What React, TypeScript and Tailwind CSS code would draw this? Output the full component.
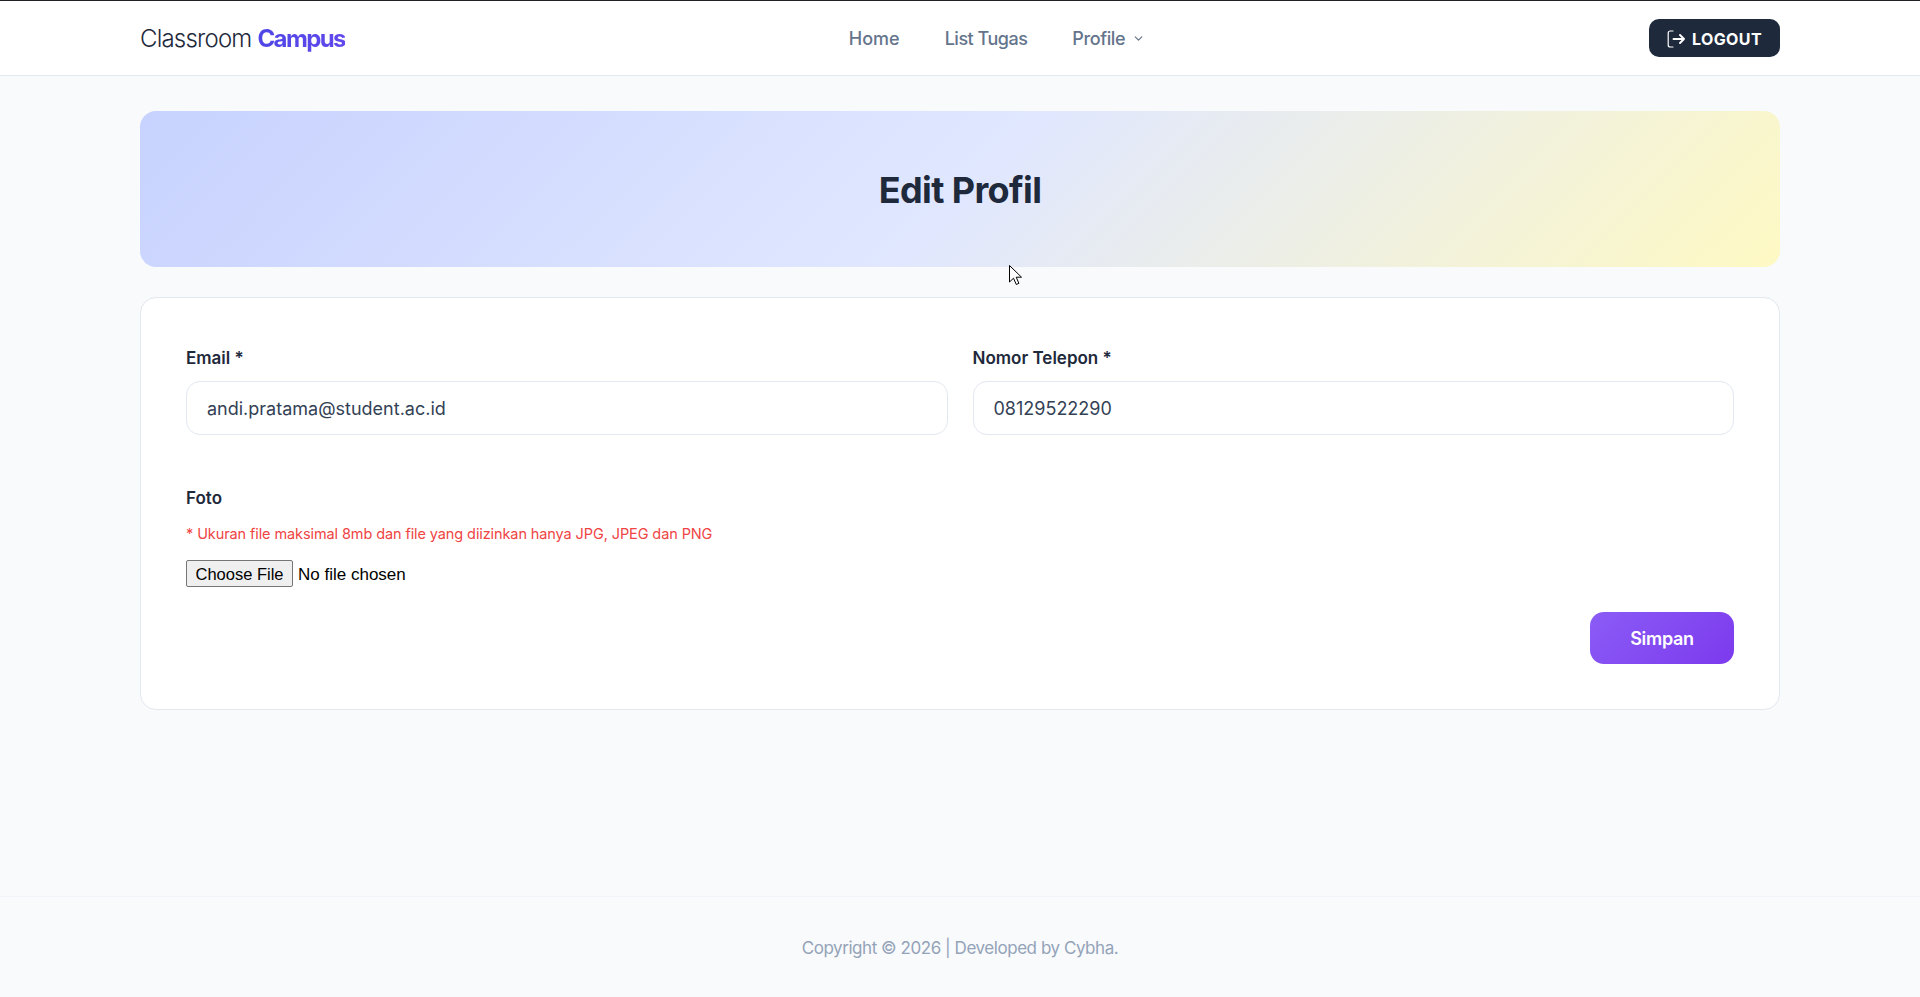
import { ChevronDown } from "lucide-react";

const App = () => {
  return (
    <div className="relative flex min-h-[997px] flex-col border-t border-[#202124] bg-[#f8fafc] font-['Inter',sans-serif] text-[#1e293b]">
      {/* Navbar */}
      <nav className="box-content h-[74px] border-b border-[#e2e8f0] bg-white">
        <div className="mx-auto flex h-full w-[1640px] items-center justify-between">
          <a className="pt-[2px] text-[24px] font-light tracking-[-0.8px] text-[#1e293b]">
            Classroom{" "}
            <span className="bg-gradient-to-r from-[#4f46e5] to-[#6048ec] bg-clip-text font-bold tracking-[-1.6px] text-transparent">
              Campus
            </span>
          </a>
          <div className="flex items-center gap-[45px] text-[18px] font-medium tracking-[-0.4px] text-[#64748b]">
            <a className="tracking-[0px]">Home</a>
            <a className="tracking-[-0.5px]">List Tugas</a>
            <a className="flex items-center gap-[7px]">
              Profile
              <ChevronDown size={13} strokeWidth={2.2} />
            </a>
          </div>
          <button className="flex h-[38px] w-[131px] items-center justify-center gap-[7px] rounded-[10px] bg-[#1e293b] pt-[1px] text-[16px] font-bold tracking-[0.4px] text-white">
            <svg width="18" height="18" viewBox="0 0 18 18" fill="none" stroke="currentColor" strokeLinecap="round" strokeLinejoin="round">
              <path d="M6 1H3.2C2 1 1.2 1.8 1.2 3v12c0 1.2.8 2 2 2H6" strokeWidth="1.2" />
              <path d="M6.5 9h10.5M13 5l4 4-4 4" strokeWidth="1.9" />
            </svg>
            LOGOUT
          </button>
        </div>
      </nav>

      {/* Content */}
      <main className="mx-auto flex w-[1640px] flex-col gap-[30px] pt-[35px]">
        <div className="flex h-[156px] items-center justify-center rounded-[16px] bg-[linear-gradient(135deg,#c7d2fe,#e0e7ff_50%,#fef9c3)] pt-[2px]">
          <h1 className="text-[36px] font-bold tracking-[-0.6px] text-[#1e293b]">Edit Profil</h1>
        </div>

        <form className="flex h-[413px] flex-col rounded-[16px] border border-[#e2e8f0] bg-white px-[45px] pt-[47px]">
          <div className="grid grid-cols-2 gap-[25px]">
            <div>
              <label className="mb-[10px] block text-[17px] font-semibold leading-[26px]">Email *</label>
              <input
                readOnly
                value="andi.pratama@student.ac.id"
                className="h-[54px] w-full rounded-[14px] border border-[#e2e8f0] bg-white px-[20px] text-[18px] text-[#334155] outline-none"
              />
            </div>
            <div>
              <label className="mb-[10px] block text-[17px] font-semibold leading-[26px]">Nomor Telepon *</label>
              <input
                readOnly
                value="08129522290"
                className="h-[54px] w-full rounded-[14px] border border-[#e2e8f0] bg-white px-[20px] text-[18px] text-[#334155] outline-none"
              />
            </div>
          </div>

          <label className="mt-[50px] block text-[17px] font-semibold leading-[26px]">Foto</label>
          <p className="mt-[12px] text-[14.5px] leading-[22px] tracking-[-0.1px] text-[#ef4444]">
            * Ukuran file maksimal 8mb dan file yang diizinkan hanya JPG, JPEG dan PNG
          </p>
          <input
            type="file"
            className="mt-[15px] block font-['Liberation_Sans',sans-serif] text-[17px] leading-[18px] text-black file:mr-[5px] file:h-[27px] file:rounded-[2px] file:border file:border-solid file:border-[#767676] file:bg-[#efefef] file:px-[8.5px] file:text-[16.5px] file:text-black"
          />

          <div className="mt-[25px] flex justify-end">
            <button
              type="button"
              className="h-[52px] w-[144px] rounded-[14px] bg-[linear-gradient(135deg,#8b5cf6,#7c3aed)] text-[18px] font-semibold tracking-[-0.3px] text-white"
            >
              Simpan
            </button>
          </div>
        </form>
      </main>

      {/* Footer */}
      <footer className="mt-auto flex h-[101px] items-center justify-center border-t border-[#f1f5f9] pt-[4px] text-[17px] tracking-[-0.45px] text-[#94a3b8]">
        Copyright © 2026 | Developed by Cybha.
      </footer>

      {/* Mouse pointer caught in the screenshot */}
      <svg className="absolute left-[1009px] top-[264px]" width="13" height="22" viewBox="0 0 13 22">
        <path d="M.5.5v16.5l4-3.8 2.8 6.3 2.6-1.2-2.7-6.1h5.3z" fill="#fff" stroke="#000" strokeWidth="1" />
      </svg>
    </div>
  );
};

export default App;
